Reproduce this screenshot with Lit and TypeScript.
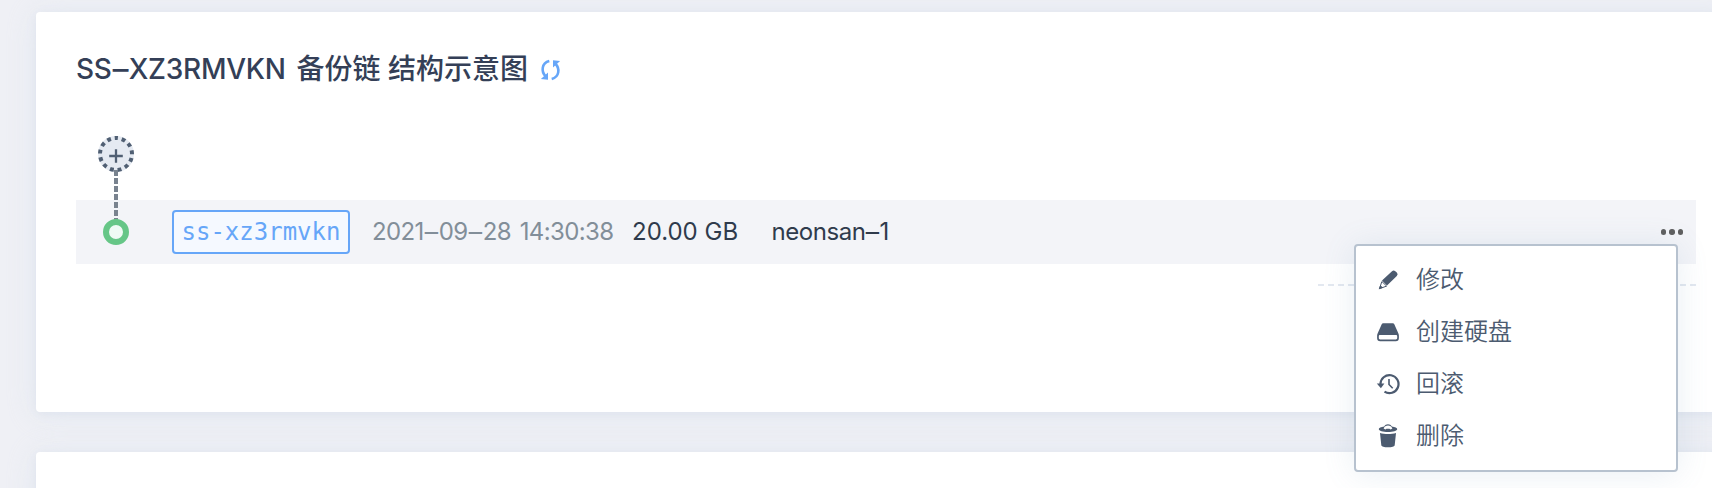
import { LitElement, html, css, svg } from "lit";
import { customElement } from "lit/decorators.js";

const icons = {
  edit: svg`<path d="M6 12.600L16 3.200a2.400 2.400 0 0 1 3.300 0l1.500 1.400a2.400 2.400 0 0 1 0 3.400L11 17.600z"/><path d="M5.900 13.500L3.400 20.700l7.200-2.600z" fill="none" stroke="currentColor" stroke-width="1"/><path d="M4.300 17.200L2.700 21.300l4.600-1.500z"/>`,
  disk: svg`<path fill-rule="evenodd" d="M7.200 3.300h9.600c.7 0 1.200.3 1.500.9l4 9c.4.9.6 1.600.6 2.600v2.100c0 2.100-1.100 3.300-3.100 3.300H4.200c-2 0-3.100-1.200-3.100-3.300v-2.100c0-1 .2-1.700.6-2.600l4-9c.3-.6.8-.9 1.500-.9zM4.200 15c-.9 0-1.400.5-1.400 1.300v1.500c0 1 .5 1.600 1.400 1.600h15.600c.9 0 1.400-.6 1.400-1.600v-1.500c0-.8-.5-1.300-1.400-1.300z"/>`,
  history: svg`<path d="M4.500 12.300a9 9 0 1 1 4 7.300" fill="none" stroke="currentColor" stroke-width="2.200"/><path d="M.8 11.600h7.600l-3.500 4.600z"/><path d="M13 7v5.500l3.700 3.700" fill="none" stroke="currentColor" stroke-width="1.600"/>`,
  trash: svg`<path fill-rule="evenodd" d="M8.200 2.400C9 .9 10.400.2 12 .2s3 .7 3.800 2.200c3.300.6 5.400 1.500 5.400 2.600 0 1.900-4.100 3-9.200 3S2.800 6.900 2.800 5c0-1.100 2.100-2 5.400-2.600zM7.600 4.500l1.700 1 1.200-.8h3l1.200.8 1.700-1C15.700 2.700 14 1.500 12 1.500s-3.700 1.200-4.400 3z"/><path d="M4 9c4.600 1.300 11.400 1.300 16 0l-1.300 12.200c-.2 1.200-3 2.100-6.700 2.100s-6.500-.9-6.700-2.100z"/>`,
};

const menu = [
  { icon: icons.edit, label: "修改" },
  { icon: icons.disk, label: "创建硬盘" },
  { icon: icons.history, label: "回滚" },
  { icon: icons.trash, label: "删除" },
];

@customElement("app-root")
export class AppRoot extends LitElement {
  static styles = css`
    :host {
      display: block;
      height: 488px;
      overflow: hidden;
      box-sizing: border-box;
      padding: 12px 0 0 36px;
      background: #eff0f5;
      font-family: Inter, "Noto Sans CJK SC", sans-serif;
      color: #343f57;
    }
    .card {
      box-sizing: border-box;
      height: 400px;
      margin-right: -24px;
      margin-bottom: 40px;
      padding: 37px 40px 0;
      border-radius: 4px;
      background: #fff;
      box-shadow: 0 2px 30px rgba(215, 226, 240, 0.45), 0 2px 8px rgba(190, 198, 218, 0.25);
    }
    .title {
      display: flex;
      align-items: center;
      height: 40px;
      margin: 0;
      font-size: 28px;
      line-height: 40px;
      font-weight: 500;
      white-space: pre;
    }
    .name {
      width: 220.5px;
      letter-spacing: -0.25px;
    }
    .refresh {
      width: 24px;
      height: 24px;
      margin: 2px 0 0 10px;
      color: #66a6f8;
    }
    .dash {
      display: inline-block;
      margin: 0 2px;
      letter-spacing: 0;
      transform: scaleX(1.75);
    }
    .pool .dash {
      margin: 0 1.5px;
    }
    .add {
      display: block;
      width: 36px;
      height: 36px;
      margin: 47px 0 0 22px;
    }
    .stem {
      width: 4px;
      height: 50px;
      margin: -2px 0 -20px 38px;
      position: relative;
      z-index: 1;
      background: repeating-linear-gradient(#79838f 0 6px, transparent 6px 8px);
    }
    .row {
      display: flex;
      align-items: center;
      height: 64px;
      background: #f3f4f8;
      font-size: 24px;
      line-height: 36px;
      white-space: nowrap;
    }
    .node {
      box-sizing: border-box;
      width: 26px;
      height: 26px;
      margin-left: 27px;
      border: 6px solid #66c687;
      border-radius: 50%;
      background: #effaf4;
      position: relative;
      z-index: 2;
    }
    .tag {
      box-sizing: border-box;
      width: 178px;
      height: 44px;
      margin-left: 43px;
      border: 2px solid #66a6f8;
      border-radius: 4px;
      background: #f5f9ff;
      color: #66a6f8;
      font-family: "DejaVu Sans Mono", monospace;
      line-height: 40px;
      text-align: center;
    }
    .time {
      width: 260px;
      margin-left: 22px;
      color: #828e99;
      letter-spacing: -0.6px;
      word-spacing: 2.5px;
    }
    .size {
      width: 139.5px;
      color: #2f3b4c;
    }
    .pool {
      color: #2f3b4c;
      letter-spacing: -0.45px;
    }
    .more {
      display: flex;
      gap: 3px;
      margin: 0 13px 0 auto;
      position: relative;
    }
    .dot {
      width: 5.4px;
      height: 5.4px;
      border-radius: 50%;
      background: #5f5f5f;
    }
    .menu {
      box-sizing: border-box;
      position: absolute;
      top: 14.7px;
      right: 5px;
      width: 324px;
      height: 228px;
      padding: 8px 20px;
      border: 2px solid #b7c2cf;
      border-radius: 4px;
      background: #fff;
      box-shadow: 0 2px 32px rgba(100, 145, 175, 0.14);
      z-index: 3;
    }
    .item {
      display: flex;
      align-items: center;
      gap: 16px;
      height: 52px;
      color: #4c5b70;
      font-weight: 350;
    }
    .icon {
      width: 24px;
      height: 24px;
      fill: currentColor;
    }
    .divider {
      width: 378px;
      height: 2px;
      margin: 20px 0 0 auto;
      background: repeating-linear-gradient(90deg, #e3e8f0 0 6px, transparent 6px 10.054px);
    }
    .row-wrap {
      width: 1620px;
    }
  `;

  dashed(text: string) {
    return text.split("-").map((part, i) => (i ? html`<span class="dash">-</span>${part}` : part));
  }

  render() {
    return html`
      <section class="card">
        <h1 class="title"><span class="name">${this.dashed("SS-XZ3RMVKN")}</span><span>备份链 结构示意图</span><svg class="refresh" viewBox="0 0 24 24">
            <g fill="none" stroke="currentColor" stroke-width="2.6">
              <path d="M11.300 3C3.600 5 2.800 13.500 7.800 18.500M13.700 21c7.700-2 8.500-10.500 3.500-15.500"/>
            </g>
            <path fill="currentColor" d="M2.900 21L10 14.600v7.100zM22.100 3L15 9.400V2.300z"/>
          </svg></h1>
        <svg class="add" viewBox="0 0 36 36">
          <circle cx="18" cy="18" r="18" fill="#e5eaf2"/>
          <circle cx="18" cy="18" r="16" fill="none" stroke="#505f73" stroke-width="4" stroke-dasharray="3.9 3.833" stroke-dashoffset="1.95" transform="rotate(-90 18 18)"/>
          <path d="M11.200 20h13.600M18 13.200v13.600" stroke="#505f73" stroke-width="2.3"/>
        </svg>
        <div class="stem"></div>
        <div class="row-wrap">
          <div class="row">
            <span class="node"></span>
            <span class="tag">ss-xz3rmvkn</span>
            <span class="time">${this.dashed("2021-09-28 14:30:38")}</span>
            <span class="size">20.00 GB</span>
            <span class="pool">${this.dashed("neonsan-1")}</span>
            <div class="more">
              <span class="dot"></span><span class="dot"></span><span class="dot"></span>
              <div class="menu">
                ${menu.map((m) => html`<div class="item"><svg class="icon" viewBox="0 0 24 24">${m.icon}</svg><span>${m.label}</span></div>`)}
              </div>
            </div>
          </div>
          <div class="divider"></div>
        </div>
      </section>
      <section class="card"></section>
    `;
  }
}
